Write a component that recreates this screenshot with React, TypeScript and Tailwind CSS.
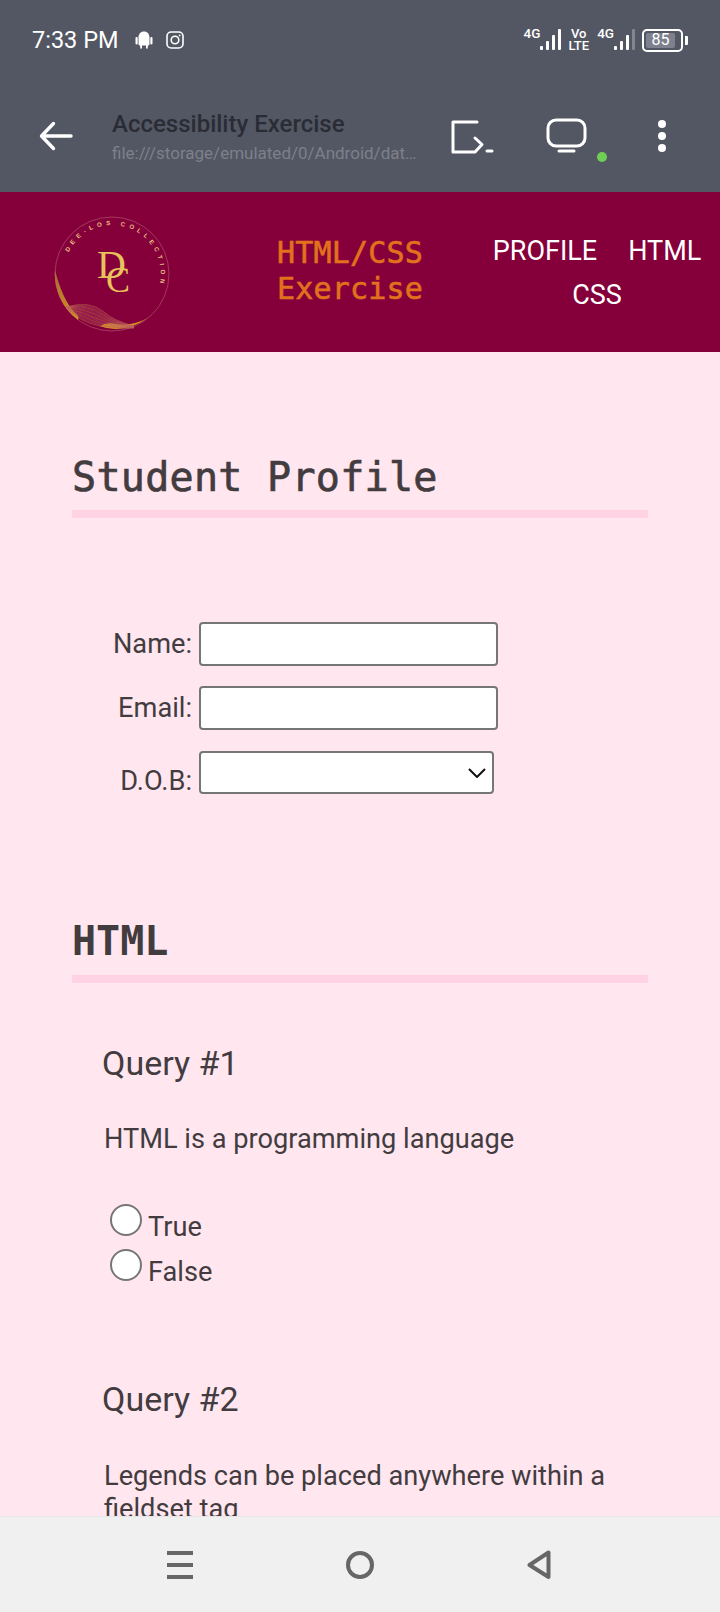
import React from "react";

const meshLines = Array.from({ length: 16 }, (_, i) => i / 15);

function Logo() {
  return (
    <svg width="116" height="116" viewBox="0 0 116 116" className="mt-[4px] shrink-0">
      <defs>
        <path id="ring" d="M14.6 36.4 A48.5 48.5 0 1 1 99.3 83.4" />
        <linearGradient id="gold" x1="0" y1="0" x2="0" y2="1">
          <stop offset="0" stopColor="#a9683a" />
          <stop offset="1" stopColor="#d1921f" />
        </linearGradient>
      </defs>
      <circle cx="58" cy="58" r="57" fill="none" stroke="#b0506a" strokeWidth="0.7" />
      <path d="M1 54 A57 57 0 0 0 24 104 Q26 100 20 96 Q8 82 1 54 Z" fill="url(#gold)" />
      <path d="M46 110 Q68 119 94 102 Q76 111 62 108 Q52 106 46 110 Z" fill="#d8961f" />
      {meshLines.map((t, i) => (
        <path
          key={i}
          d={`M12 ${91 + t} Q${36 - 10 * t} ${84 + 22 * t} ${50 - 4 * t} ${96 + 14 * t} Q${60 - 4 * t} ${105 + 8 * t} ${80} ${110 + t * 2}`}
          fill="none"
          stroke={i % 3 === 0 ? "#c98a3a" : "#b8506f"}
          strokeWidth="0.5"
          opacity="0.9"
        />
      ))}
      <text fontFamily="Liberation Sans, sans-serif" fontSize="6.2" fontWeight="700" fill="#e6bd85" letterSpacing="4.1">
        <textPath href="#ring">DEE-LOS COLLECTION</textPath>
      </text>
      <text x="43" y="62" fontFamily="Liberation Serif, serif" fontSize="40" fill="#e8c25a">D</text>
      <text x="52" y="76" fontFamily="Liberation Serif, serif" fontSize="36" fill="#e8c25a">C</text>
    </svg>
  );
}

function Bars({ dim }: { dim?: boolean }) {
  return (
    <svg width="22" height="22" viewBox="0 0 22 22" className="shrink-0">
      <rect x="0" y="17" width="3" height="4" rx="1" fill="#fff" />
      <rect x="6" y="12" width="3" height="9" rx="1" fill="#fff" />
      <rect x="12" y="6" width="3" height="15" rx="1" fill="#fff" />
      <rect x="18" y="0" width="3" height="21" rx="1" fill={dim ? "#83858f" : "#fff"} />
    </svg>
  );
}

function Android() {
  return (
    <svg width="18" height="18" viewBox="0 0 18 18" fill="#fff">
      <path d="M3.5 7 C3.5 3 5.5 0.5 9 0.5 C12.5 0.5 14.5 3 14.5 7 L14.5 13 C14.5 14 13.5 14.5 12.8 14.5 L12.8 17 C12.8 18 11 18 11 17 L11 14.5 L7 14.5 L7 17 C7 18 5.2 18 5.2 17 L5.2 14.5 C4.5 14.5 3.5 14 3.5 13 Z" />
      <rect x="0.5" y="6" width="2.2" height="7.5" rx="1.1" />
      <rect x="15.3" y="6" width="2.2" height="7.5" rx="1.1" />
    </svg>
  );
}

function Instagram() {
  return (
    <svg width="18" height="18" viewBox="0 0 18 18" fill="none" stroke="#fff" strokeWidth="1.6">
      <rect x="1" y="1" width="16" height="16" rx="4.2" />
      <circle cx="9" cy="9" r="3.8" />
      <circle cx="13.6" cy="4.4" r="0.9" fill="#fff" stroke="none" />
    </svg>
  );
}

function Radio({ label }: { label: string }) {
  return (
    <label className="flex h-[45px] items-start">
      <input type="radio" name="q1" className="h-[32px] w-[32px] appearance-none rounded-full border-2 border-[#767676] bg-white" />
      <span className="ml-[6px] mt-[7px] text-[27.2px] leading-[33px]">{label}</span>
    </label>
  );
}

function FormRow({ label, children, labelClass }: { label: string; children: React.ReactNode; labelClass?: string }) {
  return (
    <div className="flex h-[44px] items-center">
      <label className={`w-[120px] text-right text-[27.2px] leading-[33px] ${labelClass ?? ""}`}>{label}</label>
      <div className="ml-[7px]">{children}</div>
    </div>
  );
}

export default function App() {
  return (
    <div className="flex h-[1612px] w-[720px] flex-col overflow-hidden bg-[#ffe6ef] font-[Roboto,sans-serif] text-[#423c40]">
      <div className="h-[192px] shrink-0 bg-[#535763]">
        <div className="flex h-[80px] items-center pl-[32px] text-white">
          <span className="text-[23.5px] leading-[28px]">7:33 PM</span>
          <span className="ml-[17px] flex"><Android /></span>
          <span className="ml-[13px] flex"><Instagram /></span>
          <div className="ml-auto mr-[32px] flex items-center">
            <span className="mb-[14px] text-[13.5px] font-medium leading-[16px]">4G</span>
            <Bars />
            <span className="ml-[6px] flex flex-col items-center text-[13px] font-medium leading-[12px]">
              <span>Vo</span>
              <span>LTE</span>
            </span>
            <span className="ml-[8px] mb-[14px] text-[13.5px] font-medium leading-[16px]">4G</span>
            <Bars dim />
            <span className="ml-[6px] flex h-[23px] w-[41px] items-center rounded-[5px] border-2 border-white p-[2px]">
              <span className="flex h-full w-[29px] items-center justify-center rounded-[2px] bg-[#7e818d] text-[16px]">85</span>
            </span>
            <span className="ml-[2px] h-[9px] w-[3px] rounded-r-[1px] bg-white" />
          </div>
        </div>
        <div className="flex h-[112px] items-start">
          <svg width="36" height="32" viewBox="0 0 36 32" className="ml-[38px] mt-[40px] shrink-0" fill="none" stroke="#fff" strokeWidth="3.4" strokeLinecap="round" strokeLinejoin="round">
            <path d="M4.5 16 H33 M15.5 3.5 L3.5 16 L15.5 28.5" />
          </svg>
          <div className="ml-[38px] w-[310px] pt-[30px]">
            <div className="text-[24px] font-medium leading-[28px] text-[#2a2c35]">Accessibility Exercise</div>
            <div className="mt-[5px] whitespace-nowrap text-[17px] leading-[20px] text-[#7d808b]">file:///storage/emulated/0/Android/dat…</div>
          </div>
          <svg width="44" height="36" viewBox="0 0 44 36" className="ml-[29px] mt-[40px] shrink-0" fill="none" stroke="#fff" strokeWidth="3" strokeLinecap="round" strokeLinejoin="round">
            <path d="M26 2 H2 V32 H24 L31 24.5 L24 18" />
            <path d="M36 31 H41" />
          </svg>
          <svg width="42" height="38" viewBox="0 0 42 38" className="ml-[51px] mt-[38px] shrink-0" fill="none" stroke="#fff" strokeWidth="3" strokeLinecap="round">
            <rect x="2" y="2" width="37" height="26" rx="8" />
            <path d="M13 33 H28" />
          </svg>
          <span className="ml-[9px] mt-[72px] h-[10px] w-[10px] shrink-0 rounded-full bg-[#6fcf55]" />
          <div className="ml-[51px] mt-[40px] flex shrink-0 flex-col gap-[4px]">
            <span className="h-[8px] w-[8px] rounded-full bg-white" />
            <span className="h-[8px] w-[8px] rounded-full bg-white" />
            <span className="h-[8px] w-[8px] rounded-full bg-white" />
          </div>
        </div>
      </div>

      <header className="flex h-[160px] shrink-0 items-center bg-[#85003a] pl-[54px]">
        <Logo />
        <div className="mb-[2px] ml-[107px] w-[147px] font-['DejaVu_Sans_Mono',monospace] text-[30px] leading-[36px] tracking-[0.2px] text-[#e2711d] [-webkit-text-stroke:0.6px_#e2711d]">
          HTML/CSS Exercise
        </div>
        <nav className="ml-[53px] mt-[1px] flex w-[240px] flex-wrap justify-center gap-x-[31px] text-[27px] leading-[44px] text-white">
          <a>PROFILE</a>
          <a>HTML</a>
          <a>CSS</a>
        </nav>
      </header>

      <main className="min-h-0 flex-1 overflow-hidden px-[72px]">
        <h2 className="mt-[102px] border-b-[8px] border-[#ffd3e3] pb-[9px] font-['DejaVu_Sans_Mono',monospace] text-[40px] font-normal leading-[47px] tracking-[0.3px] [-webkit-text-stroke:0.7px_#423c40]">
          Student Profile
        </h2>
        <form className="mt-[104px] flex flex-col gap-[20px]">
          <FormRow label="Name:">
            <input type="text" className="block h-[44px] w-[299px] rounded-[4px] border-2 border-[#767676] bg-white" />
          </FormRow>
          <FormRow label="Email:">
            <input type="text" className="block h-[44px] w-[299px] rounded-[4px] border-2 border-[#767676] bg-white" />
          </FormRow>
          <FormRow label="D.O.B:" labelClass="mt-[18px]">
            <div className="relative">
              <select className="block h-[43px] w-[295px] appearance-none rounded-[4px] border-2 border-[#767676] bg-white" />
              <svg width="18" height="10" viewBox="0 0 18 10" className="absolute right-[8px] top-[17px]" fill="none" stroke="#111" strokeWidth="2">
                <path d="M1 1 L9 9 L17 1" />
              </svg>
            </div>
          </FormRow>
        </form>

        <h2 className="mt-[124px] border-b-[8px] border-[#ffd3e3] pb-[10px] font-['DejaVu_Sans_Mono',monospace] text-[40px] font-bold leading-[47px]">
          HTML
        </h2>
        <div className="pl-[30px]">
          <h3 className="mt-[61px] text-[34px] font-normal leading-[38px]">Query #1</h3>
          <p className="ml-[2px] mt-[41px] text-[27.2px] leading-[33px]">HTML is a programming language</p>
          <div className="ml-[8px] mt-[48px] flex flex-col">
            <Radio label="True" />
            <Radio label="False" />
          </div>
          <h3 className="mt-[86px] text-[34px] font-normal leading-[38px]">Query #2</h3>
          <p className="ml-[2px] mt-[42px] text-[27.2px] leading-[33px]">Legends can be placed anywhere within a fieldset tag</p>
        </div>
      </main>

      <div className="flex h-[96px] shrink-0 items-start justify-center border-t border-[#e9e3e6] bg-[#f0f0f0] pt-[33px]">
        <div className="mr-[2px] flex w-[384px] items-center justify-between">
          <span className="flex h-[28px] w-[26px] flex-col justify-between">
            <span className="h-[4px] bg-[#666]" />
            <span className="h-[4px] bg-[#666]" />
            <span className="h-[4px] bg-[#666]" />
          </span>
          <span className="h-[28px] w-[28px] rounded-full border-[4px] border-[#666]" />
          <svg width="24" height="30" viewBox="0 0 24 30" fill="none" stroke="#666" strokeWidth="4" strokeLinejoin="round">
            <path d="M21.5 2.5 V27 L2.5 15 Z" />
          </svg>
        </div>
      </div>
    </div>
  );
}
